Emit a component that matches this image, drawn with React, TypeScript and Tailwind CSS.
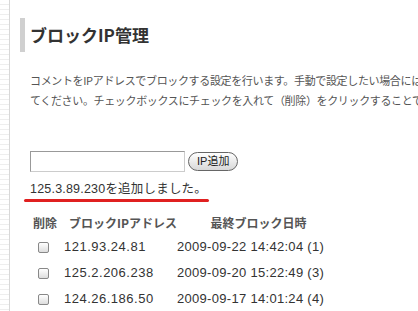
import React from "react";

const rows = [
  { ip: "121.93.24.81", date: "2009-09-22 14:42:04 (1)" },
  { ip: "125.2.206.238", date: "2009-09-20 15:22:49 (3)" },
  { ip: "124.26.186.50", date: "2009-09-17 14:01:24 (4)" },
];

const App = () => {
  return (
    <div
      className="w-[418px] h-[311px] overflow-hidden bg-white flex"
      style={{ fontFamily: '"Noto Sans CJK JP", "Liberation Sans", sans-serif' }}
    >
      <div className="w-[10px] shrink-0 border-r border-[#d8d8d8] bg-[repeating-linear-gradient(to_bottom,#ffffff_0px,#ffffff_4px,#eeeeee_4px,#eeeeee_5px)]" />
      <div className="flex-1 min-w-0 pl-[10px] pt-[18px]">
        <div className="flex items-center h-[34px] border-l-[5px] border-[#d0d0d0] pl-[5px]">
          <span className="text-[17px] font-bold text-[#333]">ブロックIP管理</span>
        </div>
        <div className="mt-[18px] pl-[10px] text-[11px] leading-[20px] text-[#555] whitespace-nowrap tracking-[-0.35px]">
          <div>コメントをIPアドレスでブロックする設定を行います。手動で設定したい場合には</div>
          <div>てください。チェックボックスにチェックを入れて（削除）をクリックすることでブロックを解除</div>
        </div>
        <div className="mt-[41px] pl-[10px] flex items-center gap-[3px]">
          <input className="w-[155px] h-[21px] border border-[#999] border-b-[#ccc] border-r-[#ccc] bg-white" />
          <button
            className="h-[19px] px-[8px] rounded-full border border-[#666] bg-gradient-to-b from-white to-[#d8d8d8] text-[11px] leading-[17px] text-[#222]"
            style={{ fontFamily: '"Liberation Sans", "Noto Sans CJK JP", sans-serif' }}
          >
            IP追加
          </button>
        </div>
        <div className="mt-[8px] ml-[4px] w-fit">
          <div
            className="pl-[6px] pr-[2px] text-[12.5px] leading-[18px] text-[#333] tracking-[0.2px]"
            style={{ fontFamily: '"Liberation Sans", "Noto Sans CJK JP", sans-serif' }}
          >
            125.3.89.230を追加しました。
          </div>
          <div className="mt-[1px] h-[3px] rounded-full bg-[#e02020]" />
        </div>
        <table className="mt-[10px] ml-[13px] text-[13px] text-[#333] border-collapse table-fixed">
          <colgroup>
            <col className="w-[31px]" />
            <col className="w-[113px]" />
            <col className="w-[153px]" />
          </colgroup>
          <thead>
            <tr className="text-[12px] font-bold text-[#555] h-[22px]">
              <th className="text-left font-bold">削除</th>
              <th className="text-left pl-[5px] font-bold whitespace-nowrap">ブロックIPアドレス</th>
              <th className="text-center pl-[10px] font-bold">最終ブロック日時</th>
            </tr>
          </thead>
          <tbody style={{ fontFamily: '"Liberation Sans", sans-serif' }}>
            {rows.map((r) => (
              <tr key={r.ip} className="h-[26px]">
                <td className="pl-[5px]">
                  <div className="w-[11px] h-[11px] rounded-[2px] border border-[#888] bg-gradient-to-b from-white to-[#ddd]" />
                </td>
                <td className="tracking-[0.5px]">{r.ip}</td>
                <td className="tracking-[0.3px] whitespace-nowrap">{r.date}</td>
              </tr>
            ))}
          </tbody>
        </table>
      </div>
    </div>
  );
};

export default App;
